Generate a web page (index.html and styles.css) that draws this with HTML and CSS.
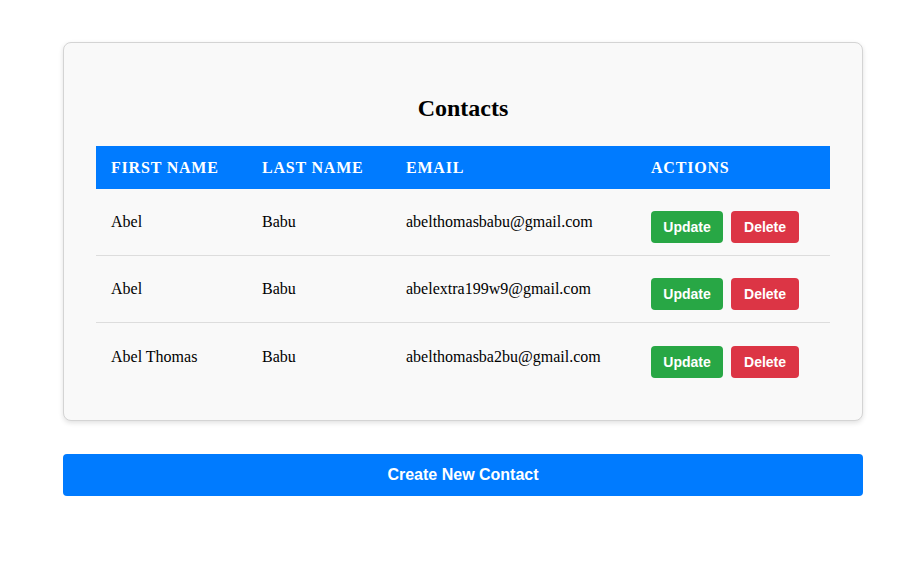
FILE: index.html
```html
<!DOCTYPE html>
<html lang="en">
<head>
<meta charset="utf-8">
<title>Contacts</title>
<link rel="stylesheet" href="styles.css">
</head>
<body>
<main class="page">
  <section class="card">
    <h2 class="title">Contacts</h2>
    <table class="contacts">
      <thead>
        <tr>
          <th class="col-first">First Name</th>
          <th class="col-last">Last Name</th>
          <th class="col-email">Email</th>
          <th class="col-actions">Actions</th>
        </tr>
      </thead>
      <tbody>
        <tr>
          <td>Abel</td>
          <td>Babu</td>
          <td>abelthomasbabu@gmail.com</td>
          <td class="actions"><div class="btn-group"><button class="btn btn-update">Update</button><button class="btn btn-delete">Delete</button></div></td>
        </tr>
        <tr>
          <td>Abel</td>
          <td>Babu</td>
          <td>abelextra199w9@gmail.com</td>
          <td class="actions"><div class="btn-group"><button class="btn btn-update">Update</button><button class="btn btn-delete">Delete</button></div></td>
        </tr>
        <tr>
          <td>Abel Thomas</td>
          <td>Babu</td>
          <td>abelthomasba2bu@gmail.com</td>
          <td class="actions"><div class="btn-group"><button class="btn btn-update">Update</button><button class="btn btn-delete">Delete</button></div></td>
        </tr>
      </tbody>
    </table>
  </section>
  <button class="create-btn">Create New Contact</button>
</main>
</body>
</html>
```

FILE: styles.css
```css
html, body {
  margin: 0;
  padding: 0;
  background: #ffffff;
}

body {
  font-family: "Liberation Serif", "Times New Roman", serif;
  font-size: 16px;
  color: #000;
}

.page {
  width: 800px;
  padding: 42px 0 0 63px;
  display: flex;
  flex-direction: column;
}

.card {
  box-sizing: border-box;
  width: 800px;
  background: #f9f9f9;
  border: 1px solid #d4d4d4;
  border-radius: 8px;
  box-shadow: 0 2px 5px rgba(0, 0, 0, 0.12);
  padding: 32px 32px 30.5px;
}

.title {
  margin: 20px 0 24px;
  text-align: center;
  font-size: 24px;
  font-weight: bold;
}

.contacts {
  width: 100%;
  border-collapse: collapse;
}

.contacts th {
  background: #007bff;
  color: #fff;
  text-align: left;
  text-transform: uppercase;
  letter-spacing: 0.05em;
  font-weight: bold;
  font-size: 16px;
  line-height: 19.6px;
  padding: 12px 15px 11px;
}

.col-first { width: 121px; }
.col-last { width: 114px; }
.col-email { width: 215px; }
.col-actions { width: 164px; }

.contacts td {
  vertical-align: top;
  padding: 24.4px 15px 10px;
  border-bottom: 1px solid #dddddd;
  line-height: 18px;
}

.contacts td.actions {
  padding: 22.4px 15px 12px;
}

.contacts tbody tr:last-child td {
  border-bottom: none;
}

.btn-group {
  display: flex;
  gap: 8px;
}

.btn {
  font-family: "Liberation Sans", Arial, sans-serif;
  font-weight: bold;
  font-size: 14px;
  line-height: 16px;
  color: #fff;
  border: none;
  border-radius: 4px;
  cursor: pointer;
}

.btn-update { background: #28a745; padding: 8px 12.3px; }
.btn-delete { background: #dc3545; padding: 8px 13px; }

.create-btn {
  margin-top: 32.5px;
  width: 800px;
  height: 42px;
  background: #007bff;
  color: #fff;
  border: none;
  border-radius: 4px;
  font-family: "Liberation Sans", Arial, sans-serif;
  font-weight: bold;
  font-size: 16px;
  cursor: pointer;
}
```
